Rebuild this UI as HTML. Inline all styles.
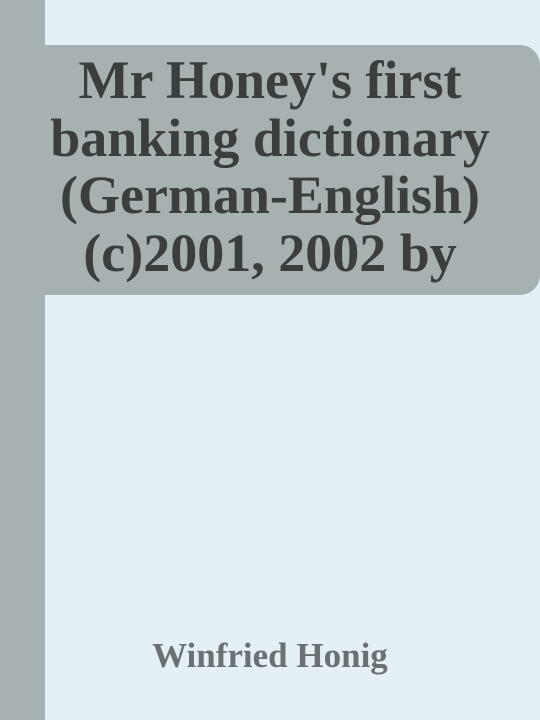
<!DOCTYPE html>
<html><head><style>
body{margin:0;width:540px;height:720px;background:#e4f0f5;position:relative;overflow:hidden;font-family:"Liberation Serif",serif;}
.bar{position:absolute;left:0;top:0;width:45px;height:720px;background:#a8b1b2;}
.box{position:absolute;left:45px;top:45px;width:495px;height:250px;background:#a8b1b2;border-radius:0 20px 20px 0;}
.title{position:absolute;left:0;top:52px;width:540px;text-align:center;font-weight:bold;font-size:54px;line-height:57.5px;color:#3a3e3f;white-space:nowrap;}
.author{position:absolute;left:0;top:636px;width:540px;text-align:center;font-weight:bold;font-size:35px;line-height:40px;color:#6a7073;}
</style></head><body>
<div class="bar"></div><div class="box"></div>
<div class="title">Mr Honey's first<br>banking dictionary<br>(German-English)<br>(c)2001, 2002 by</div>
<div class="author">Winfried Honig</div>
</body></html>
